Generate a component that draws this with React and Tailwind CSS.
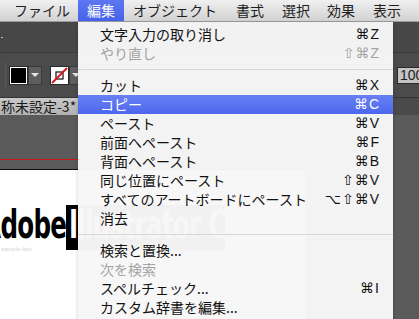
import React from "react";

const menuTitles = [
  { label: "ファイル", w: "w-[78px]", pl: "pl-[14px]" },
  { label: "編集", w: "w-[46px]", pl: "pl-[9px]", active: true },
  { label: "オブジェクト", w: "w-[103px]", pl: "pl-[9px]" },
  { label: "書式", w: "w-[46px]", pl: "pl-[9px]" },
  { label: "選択", w: "w-[45px]", pl: "pl-[9px]" },
  { label: "効果", w: "w-[46px]", pl: "pl-[9px]" },
  { label: "表示", w: "w-[55px]", pl: "pl-[9px]" },
];

const items = [
  { label: "文字入力の取り消し", keys: "⌘Z" },
  { label: "やり直し", keys: "⇧⌘Z", disabled: true },
  "sep",
  { label: "カット", keys: "⌘X" },
  { label: "コピー", keys: "⌘C", active: true },
  { label: "ペースト", keys: "⌘V" },
  { label: "前面へペースト", keys: "⌘F" },
  { label: "背面へペースト", keys: "⌘B" },
  { label: "同じ位置にペースト", keys: "⇧⌘V" },
  { label: "すべてのアートボードにペースト", keys: "⌥⇧⌘V" },
  { label: "消去", keys: "" },
  "sep",
  { label: "検索と置換...", keys: "" },
  { label: "次を検索", keys: "", disabled: true },
  { label: "スペルチェック...", keys: "⌘I" },
  { label: "カスタム辞書を編集...", keys: "" },
];

const jp = "font-['Noto_Sans_CJK_JP','Noto_Sans',sans-serif]";
const keyFont = "font-['Liberation_Sans','DejaVu_Sans','Noto_Sans_CJK_JP',sans-serif]";
const heavy = "font-['DejaVu_Sans_Condensed','DejaVu_Sans',sans-serif] font-bold text-[39px] leading-[40px] tracking-[-1px] whitespace-nowrap";

const Arrow = () => (
  <div className="w-[14px] h-[19px] bg-[#5e5e5e] border border-[#3a3a3a] flex items-center justify-center">
    <div className="w-0 h-0 border-l-[4px] border-r-[4px] border-t-[4px] border-l-transparent border-r-transparent border-t-[#e6e6e6]" />
  </div>
);

export default function App() {
  return (
    <div className={`relative w-[419px] h-[319px] overflow-hidden bg-[#5a5a5a] ${jp}`}>
      {/* menu bar */}
      <div className="h-[22px] flex items-stretch bg-gradient-to-b from-[#f0f0f0] to-[#d2d2d2] text-[14px] text-[#1e1e1e] border-b border-[#9a9a9a]">
        {menuTitles.map((m) => (
          <div
            key={m.label}
            className={`${m.w} ${m.pl} shrink-0 flex items-center whitespace-nowrap ${
              m.active ? "bg-gradient-to-b from-[#5d77f1] to-[#4563ec] text-white" : ""
            }`}
          >
            {m.label}
          </div>
        ))}
      </div>

      {/* app underneath */}
      <div className="flex flex-col">
        <div className="h-[30px] bg-[#474747] flex items-center">
          <div className="ml-[1px] w-[2px] h-[1px] bg-[#bbb]" />
        </div>
        <div className="h-[45px] bg-[#4b4b4b] border-t border-[#3c3c3c] flex items-center">
          <div className="ml-[5px] w-[1px] h-[26px] bg-[#3a3a3a] border-r border-[#5a5a5a]" />
          <div className="ml-[3px] flex">
            <div className="w-[19px] h-[19px] border border-[#2a2a2a] bg-white p-[1px]">
              <div className="w-full h-full bg-black" />
            </div>
            <Arrow />
          </div>
          <div className="ml-[8px] flex">
            <div className="w-[19px] h-[19px] border border-[#2a2a2a] bg-white flex items-center justify-center">
              <svg width="17" height="17" viewBox="0 0 17 17">
                <rect x="5" y="5" width="7" height="7" fill="none" stroke="#111" strokeWidth="1.2" />
                <line x1="1" y1="16" x2="16" y2="1" stroke="#e0141c" strokeWidth="2" />
              </svg>
            </div>
            <Arrow />
          </div>
          <div className="ml-auto mr-[-10px] w-[32px] h-[17px] bg-[#c4c4c4] border border-[#2c2c2c] text-[14px] leading-[15px] pl-[2px] text-[#222] font-['Liberation_Sans',sans-serif]">
            100
          </div>
        </div>
        <div className="h-[18px] bg-[#4a4a4a] border-t border-[#333] flex">
          <div className="w-[95px] bg-gradient-to-b from-[#c9c9c9] to-[#b1b1b1] text-[14px] leading-[17px] text-[#1a1a1a] whitespace-nowrap overflow-hidden">
            <span className="ml-[-13px]">名称未設定-3*</span>
          </div>
        </div>
        <div className="h-[55px] bg-[#5a5a5a] flex flex-col">
          <div className="mt-[44px] w-[305px] h-[1px] bg-[#d11414]" />
          <div className="mt-auto w-[305px] h-[1px] bg-[#111]" />
        </div>
        <div className="h-[160px] flex">
          <div className="w-[305px] bg-white pt-[35px]">
            <div className="flex items-start h-[45px]">
              <div className="w-[66px] h-[40px] overflow-hidden flex justify-end">
                <span className={`${heavy} text-black scale-x-[0.7] origin-right shrink-0`}>Adobe</span>
              </div>
              <div className="w-[159px] h-[45px] bg-black overflow-hidden">
                <span className={`${heavy} text-white block scale-x-[0.7] origin-left ml-[3px]`}>Illustrator CC</span>
              </div>
            </div>
            <div className="mt-[-4px] ml-[1px] w-[40px] text-[6px] leading-[7px] text-[#d4d4d4] font-['Liberation_Sans',sans-serif]">sample text</div>
          </div>
        </div>
      </div>

      {/* dropdown menu */}
      <div className="absolute left-[78px] top-[22px] w-[315px] h-[310px] bg-[#f7f7f7]/[0.975] shadow-[0_2px_4px_rgba(0,0,0,0.2)] pt-[3px] text-[14px]">
        {items.map((it, i) =>
          it === "sep" ? (
            <div key={i} className="h-[13px] flex items-center">
              <div className="w-full h-[1px] bg-[#d7d7d7]" />
            </div>
          ) : (
            <div
              key={i}
              className={`h-[19px] flex items-center justify-between pl-[22px] pr-[13px] whitespace-nowrap ${
                it.active
                  ? "bg-gradient-to-b from-[#6880f3] to-[#4d67ee] text-white"
                  : it.disabled
                  ? "text-[#a3a3a3]"
                  : "text-[#111]"
              }`}
            >
              <span>{it.label}</span>
              <span className={`${keyFont} tracking-[1px]`}>{it.keys}</span>
            </div>
          )
        )}
      </div>
    </div>
  );
}
